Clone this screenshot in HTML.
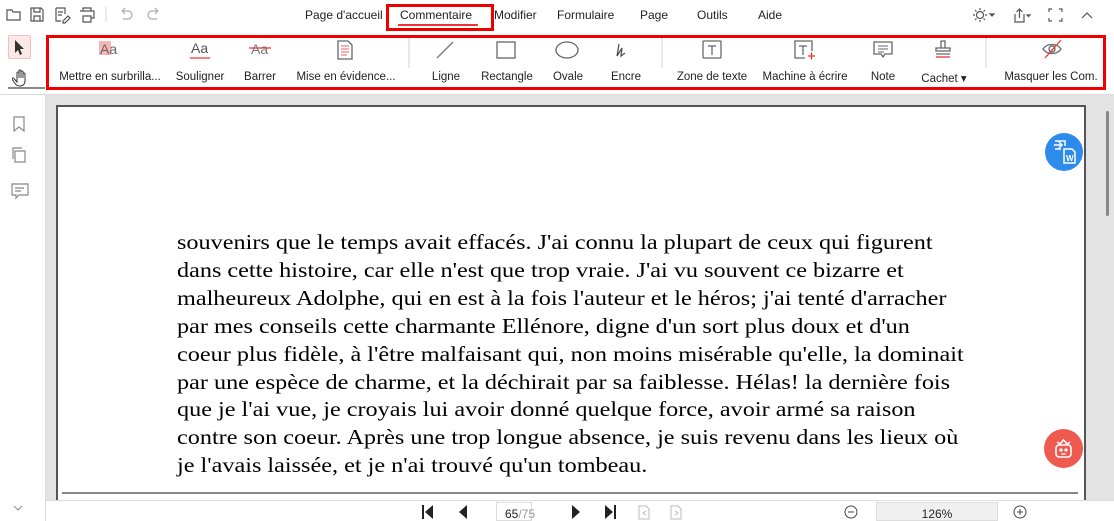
<!DOCTYPE html>
<html><head><meta charset="utf-8"><style>
*{margin:0;padding:0;box-sizing:border-box}
body{width:1114px;height:521px;overflow:hidden;background:#fff;font-family:"Liberation Sans",sans-serif;position:relative;color:#222}
.a{position:absolute}
.menu{font-size:12px;top:8px}
.tl{position:absolute;top:71px;font-size:11.5px;color:#222;white-space:nowrap;transform:translateX(-50%)}
.txt{position:absolute;left:177px;top:229px;font-family:"Liberation Serif",serif;font-size:21px;line-height:27.9px;color:#000;white-space:nowrap;transform:scaleX(1.153);transform-origin:0 0}
</style></head><body>
<svg class="a" style="left:6px;top:6px" width="170" height="18" fill="none" stroke="#555" stroke-width="1.2">
<path d="M1 4h5l1 2h7v8H1z"/><path d="M25 2h10l2 2v11H25z M28 2v4h6V2 M28 15v-5h6v5"/>
<path d="M50 2h9v6 M50 2v13h5 M52 6h5 M52 9h4 M57 15l5-5 2 2-5 5h-2z"/>
<path d="M77 5V2h8v3 M74 5h14v7h-3 M77 10h8v6h-8z"/>
<line x1="100" y1="1" x2="100" y2="16" stroke="#ddd"/>
<path d="M116 5h6a4 4 0 010 8h-5 M116 5l3-3 M116 5l3 3" stroke="#aaa"/>
<path d="M152 5h-6a4 4 0 000 8h5 M152 5l-3-3 M152 5l-3 3" stroke="#aaa"/>
</svg>
<div class="a menu" style="left:305px">Page d'accueil</div>
<div class="a menu" style="left:400px">Commentaire</div>
<div class="a" style="left:398px;top:24px;width:80px;height:2px;background:#e33"></div>
<div class="a" style="left:386px;top:4px;width:108px;height:27px;border:3px solid #e00"></div>
<div class="a menu" style="left:494px">Modifier</div>
<div class="a menu" style="left:557px">Formulaire</div>
<div class="a menu" style="left:640px">Page</div>
<div class="a menu" style="left:697px">Outils</div>
<div class="a menu" style="left:758px">Aide</div>
<svg class="a" style="left:970px;top:6px" width="130" height="18" fill="none" stroke="#555" stroke-width="1.2">
<circle cx="10" cy="9" r="3.5"/><path d="M10 2v2M10 14v2M3 9h2M15 9h2M5 4l1.5 1.5M13.5 12.5L15 14M5 14l1.5-1.5M13.5 5.5L15 4"/>
<path d="M20 8l2 2 2-2z" fill="#555"/>
<path d="M45 8v8h9V8 M49.5 12V3 M46.5 6l3-3 3 3"/><path d="M57 9l1.5 1.5 1.5-1.5z" fill="#555"/>
<path d="M79 6V3h3 M89 3h3v3 M79 12v3h3 M92 12v3h-3"/>
<path d="M112 12l5-5 5 5"/>
</svg>
<div class="a" style="left:8px;top:35px;width:23px;height:24px;background:#fde8e8;border:1px solid #f6c0c0;border-radius:2px"></div>
<svg class="a" style="left:12px;top:38px" width="16" height="50" fill="#333"><path d="M3 2l0 13 3-3 2 5 2-1-2-5h4z"/><path d="M5 44v-9a1 1 0 012 0v5-7a1 1 0 012 0v7-6a1 1 0 012 0v6-4a1 1 0 012 0v7c0 3-2 5-5 5s-4-1-6-4l-2-3a1 1 0 011.5-1z" fill="none" stroke="#333" stroke-width="1"/></svg>
<div class="a" style="left:8px;top:87px;width:37px;height:2px;background:#888"></div>
<div class="a" style="left:46px;top:35px;width:1060px;height:55px;border:3px solid #e00"></div>
<svg class="a" style="left:0;top:38px" width="1114" height="30" fill="none" stroke="#666" stroke-width="1.3">
<rect x="99" y="3" width="12" height="14" fill="#f7b5b5" stroke="none"/>
<text x="100" y="16" font-size="14" fill="#666" stroke="none" font-family="Liberation Sans">Aa</text>
<text x="191" y="15" font-size="14" fill="#555" stroke="none" font-family="Liberation Sans">Aa</text>
<line x1="190" y1="20" x2="210" y2="20" stroke="#e33"/>
<text x="251" y="16" font-size="14" fill="#777" stroke="none" font-family="Liberation Sans">Aa</text>
<line x1="249" y1="10" x2="271" y2="10" stroke="#e33"/>
<path d="M338 3h10l4 4v14h-14z"/><path d="M341 8h8M341 11h8M341 14h8M341 17h6" stroke="#f08080"/>
<line x1="437" y1="20" x2="453" y2="4" stroke="#777"/>
<rect x="497" y="4" width="18" height="16"/>
<ellipse cx="567" cy="12" rx="11" ry="8"/>
<path d="M617 18l2-12-2 12 5-8-1 8 4-3" stroke="#555"/>
<rect x="703" y="3" width="18" height="17" rx="1"/><path d="M708 8h8M712 8v9"/>
<path d="M805 20h-10V3h17v10"/><path d="M799 8h8M803 8v9"/><path d="M808 18h7M811.5 14.5v7" stroke="#e33"/>
<path d="M874 4h18v12h-7l-2 3-2-3h-7z"/><path d="M878 8h10M878 11h10M878 14h6" stroke-width="1"/>
<path d="M941 3h4v7h-4z M936 10h14v3h-14z M936 16h14" stroke="#666"/><line x1="936" y1="19" x2="950" y2="19" stroke="#e33"/>
<path d="M1043 11c4-6 14-6 18 0-4 6-14 6-18 0z"/><circle cx="1052" cy="11" r="3"/><line x1="1045" y1="20" x2="1061" y2="2" stroke="#e33"/>
<line x1="409" y1="0" x2="409" y2="44" stroke="#ddd"/>
<line x1="662" y1="0" x2="662" y2="44" stroke="#ddd"/>
<line x1="986" y1="0" x2="986" y2="44" stroke="#ddd"/>
</svg>
<div class="tl" style="left:110px">Mettre en surbrilla...</div>
<div class="tl" style="left:200px">Souligner</div>
<div class="tl" style="left:260px">Barrer</div>
<div class="tl" style="left:346px">Mise en évidence...</div>
<div class="tl" style="left:446px">Ligne</div>
<div class="tl" style="left:507px">Rectangle</div>
<div class="tl" style="left:568px">Ovale</div>
<div class="tl" style="left:626px">Encre</div>
<div class="tl" style="left:712px">Zone de texte</div>
<div class="tl" style="left:805px">Machine à écrire</div>
<div class="tl" style="left:883px">Note</div>
<div class="tl" style="left:944px">Cachet ▾</div>
<div class="tl" style="left:1051px">Masquer les Com.</div>
<div class="a" style="left:0;top:94px;width:1114px;height:1px;background:#ddd"></div>
<div class="a" style="left:45px;top:95px;width:1069px;height:405px;background:#e3e3e3"></div>
<div class="a" style="left:45px;top:95px;width:1px;height:426px;background:#ddd"></div>
<svg class="a" style="left:10px;top:115px" width="20" height="100" fill="none" stroke="#888" stroke-width="1.2">
<path d="M4 2h10v14l-5-4-5 4z"/>
<path d="M3 44V33h9 M5 36h10v11H5z"/>
<path d="M2 69h16v11H9l-3 3v-3H2z M5 73h9M5 76h6"/>
</svg>
<svg class="a" style="left:12px;top:503px" width="12" height="10"><path d="M2 3l4 4 4-4" fill="none" stroke="#888"/></svg>
<div class="a" style="left:56px;top:105px;width:1030px;height:400px;background:#fff;border:2px solid #555;border-bottom:none"></div>
<div class="a" style="left:62px;top:492px;width:1016px;height:2px;background:#888"></div>
<div class="a" style="left:1106px;top:111px;width:3px;height:105px;background:#888;border-radius:2px"></div>
<div class="txt">souvenirs que le temps avait effacés. J'ai connu la plupart de ceux qui figurent<br>dans cette histoire, car elle n'est que trop vraie. J'ai vu souvent ce bizarre et<br>malheureux Adolphe, qui en est à la fois l'auteur et le héros; j'ai tenté d'arracher<br>par mes conseils cette charmante Ellénore, digne d'un sort plus doux et d'un<br>coeur plus fidèle, à l'être malfaisant qui, non moins misérable qu'elle, la dominait<br>par une espèce de charme, et la déchirait par sa faiblesse. Hélas! la dernière fois<br>que je l'ai vue, je croyais lui avoir donné quelque force, avoir armé sa raison<br>contre son coeur. Après une trop longue absence, je suis revenu dans les lieux où<br>je l'avais laissée, et je n'ai trouvé qu'un tombeau.</div>
<div class="a" style="left:1045px;top:133px;width:38px;height:38px;border-radius:50%;background:#2d8ceb"></div>
<svg class="a" style="left:1045px;top:133px" width="38" height="38" fill="none" stroke="#fff" stroke-width="1.5"><path d="M9 12h8M14 9l3 3-3 3M10 8h10v5M10 16h6"/><path d="M19 16h8l3 3v11H19z"/><text x="21" y="28" font-size="8" fill="#fff" stroke="none" font-family="Liberation Sans" font-weight="bold">W</text></svg>
<div class="a" style="left:1044px;top:429px;width:39px;height:39px;border-radius:50%;background:#ee5a50"></div>
<svg class="a" style="left:1044px;top:429px" width="39" height="39" fill="none" stroke="#fff" stroke-width="1.6"><path d="M13 13l3 2 3.5-4 3.5 4 3-2"/><rect x="12" y="16" width="15" height="12" rx="3"/><circle cx="17" cy="21" r=".8" fill="#fff"/><circle cx="22" cy="21" r=".8" fill="#fff"/><path d="M17.5 25h4"/></svg>
<div class="a" style="left:46px;top:500px;width:1068px;height:21px;background:#fff;border-top:1px solid #ddd"></div>
<svg class="a" style="left:415px;top:503px" width="280" height="18" fill="#222">
<rect x="7" y="2" width="2" height="14"/><path d="M18 2v14l-8-7z"/>
<path d="M52 2v14l-8-7z"/>
<path d="M157 2v14l8-7z"/><path d="M190 2v14l8-7z"/><rect x="199" y="2" width="2" height="14"/>
<path d="M224 3h7l3 3v10h-10z M231 8l-3 2 3 2" fill="none" stroke="#bbb"/>
<path d="M256 3h7l3 3v10h-10z M260 8l3 2-3 2" fill="none" stroke="#bbb"/>
</svg>
<div class="a" style="left:496px;top:502px;width:36px;height:19px;border:1px solid #ddd;font-size:12px;padding:4px 0 0 8px">65<span style="color:#999">/75</span></div>
<svg class="a" style="left:843px;top:505px" width="190" height="15" fill="none" stroke="#444"><circle cx="8" cy="7" r="6"/><path d="M5 7h6"/><circle cx="177" cy="7" r="6"/><path d="M174 7h6M177 4v6"/></svg>
<div class="a" style="left:876px;top:502px;width:122px;height:19px;background:#f0f0f0;border:1px solid #ddd;font-size:12px;text-align:center;padding-top:4px">126%</div>
</body></html>
